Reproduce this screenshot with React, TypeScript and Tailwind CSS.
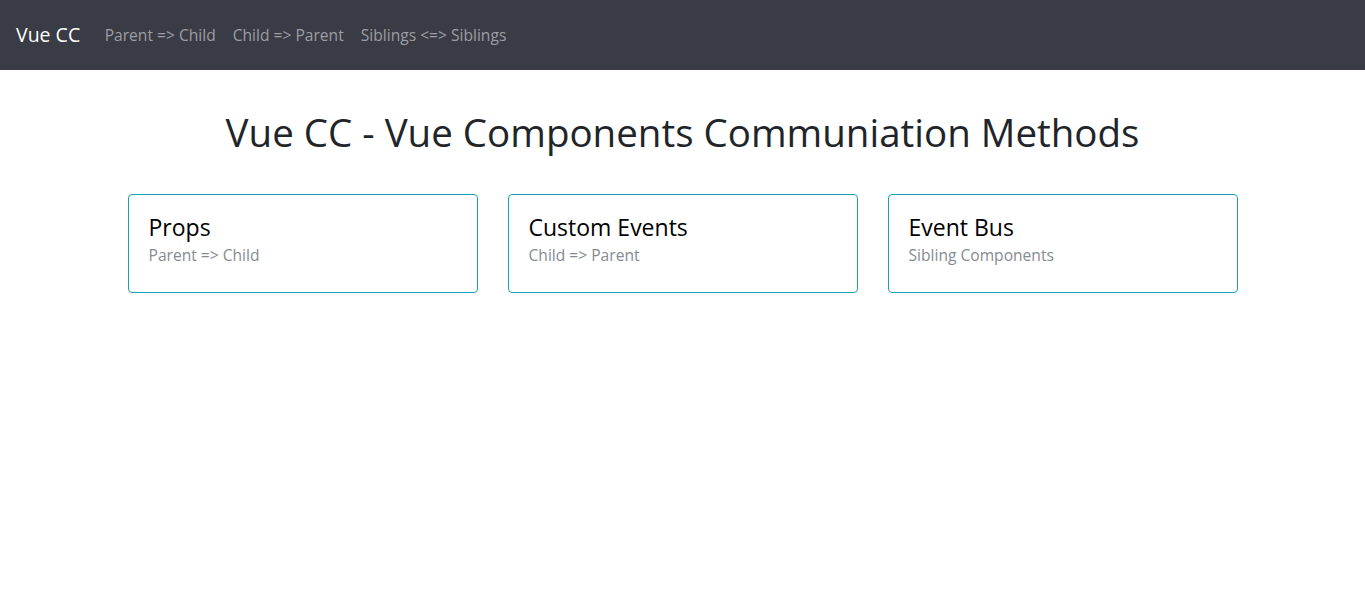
const font = { fontFamily: '"Open Sans", "Noto Sans", sans-serif' }

const cards = [
  { title: 'Props', sub: 'Parent => Child' },
  { title: 'Custom Events', sub: 'Child => Parent' },
  { title: 'Event Bus', sub: 'Sibling Components' },
]

export default function App() {
  return (
    <div className="min-h-[604px] bg-white" style={font}>
      <nav className="flex h-[70px] items-center bg-[#393b45] px-4">
        <span className="mr-4 text-[19.5px] leading-[30px] text-white">Vue CC</span>
        <div className="flex">
          {['Parent => Child', 'Child => Parent', 'Siblings <=> Siblings'].map(l => (
            <a key={l} className="px-[8.5px] text-[15.6px] leading-6 text-[#9d9ea3]">{l}</a>
          ))}
        </div>
      </nav>

      <div className="mx-auto w-[1140px] px-[15px]">
        <h1 className="mt-[38px] text-center text-[38.5px] leading-[48px] text-[#212529]">
          Vue CC - Vue Components Communiation Methods
        </h1>
        <div className="mt-[38px] grid grid-cols-3 gap-[30px]">
          {cards.map(c => (
            <div key={c.title} className="h-[99px] rounded-[4px] border border-[#17a2b8] px-5 pt-[17px]">
              <div className="text-[23px] leading-[30px] text-black">{c.title}</div>
              <div className="mt-[1px] text-[15.6px] leading-6 text-[#858b91]">{c.sub}</div>
            </div>
          ))}
        </div>
      </div>
    </div>
  )
}
